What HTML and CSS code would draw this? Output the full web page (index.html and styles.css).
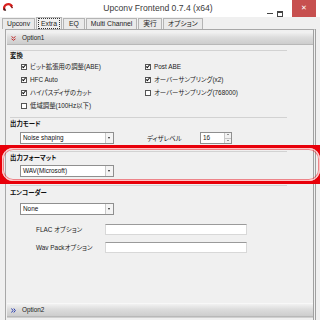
FILE: index.html
```html
<!DOCTYPE html>
<html lang="ja">
<head>
    <meta charset="UTF-8">
    <title>Upconv Frontend</title>
    <link rel="stylesheet" href="styles.css">
</head>
<body>
    <div class="window">
        <div class="titlebar">
            <svg class="appicon" width="10" height="9" viewBox="0 0 10 9">
                <path d="M1.5 8 A4 4 0 0 1 9 4.5" fill="none" stroke="#d8201e" stroke-width="2.4"/>
                <path d="M1 6.5 L2.5 8.8" stroke="#402020" stroke-width="1.6"/>
                <path d="M8 4 L9.5 6" stroke="#901010" stroke-width="1.4"/>
            </svg>
            <div class="title">Upconv Frontend 0.7.4 (x64)</div>
            <div class="winbtns">
                <span class="btn min"><i></i></span>
                <span class="btn max"><i></i></span>
                <span class="btn close">&#x2715;</span>
            </div>
        </div>

        <div class="tabs">
            <div class="tab">Upconv</div>
            <div class="tab active"><span>Extra</span></div>
            <div class="tab eq">EQ</div>
            <div class="tab">Multi Channel</div>
            <div class="tab">実行</div>
            <div class="tab">オプション</div>
        </div>

        <div class="page">
            <div class="bar">
                <svg class="chev" width="5" height="5" viewBox="0 0 5 5">
                    <path d="M0.5 0.5 L2.5 2 L4.5 0.5 M0.5 2.8 L2.5 4.3 L4.5 2.8" fill="none" stroke="#c0282a" stroke-width="1"/>
                </svg>
                Option1
            </div>

            <div class="content">
                <div class="group conv">
                    <div class="label">変換</div>
                    <div class="checks">
                        <label class="check"><span class="cb on"></span>ビット拡張用の調整(ABE)</label>
                        <label class="check"><span class="cb on"></span>Post ABE</label>
                        <label class="check"><span class="cb on"></span>HFC Auto</label>
                        <label class="check"><span class="cb on"></span>オーバーサンプリング(x2)</label>
                        <label class="check"><span class="cb on"></span>ハイパスディザのカット</label>
                        <label class="check"><span class="cb"></span>オーバーサンプリング(768000)</label>
                        <label class="check"><span class="cb"></span>低域調整(100Hz以下)</label>
                    </div>
                </div>

                <div class="group mode">
                    <div class="label">出力モード</div>
                    <div class="row">
                        <div class="select">Noise shaping<span class="drop"></span></div>
                        <div class="spinlabel">ディザレベル</div>
                        <div class="spin">16<span class="arrows"><span class="up"></span><span class="down"></span></span></div>
                    </div>
                </div>

                <div class="group format">
                    <div class="label">出力フォーマット</div>
                    <div class="select">WAV(Microsoft)<span class="drop"></span></div>
                </div>

                <div class="group encoder">
                    <div class="label">エンコーダー</div>
                    <div class="select">None<span class="drop"></span></div>
                    <div class="field flac">
                        <span class="fieldlabel">FLAC オプション</span>
                        <span class="textbox"></span>
                    </div>
                    <div class="field wavpack">
                        <span class="fieldlabel">Wav Packオプション</span>
                        <span class="textbox"></span>
                    </div>
                </div>
            </div>

            <div class="bar second">
                <svg class="chev" width="5" height="5" viewBox="0 0 5 5">
                    <path d="M0.5 0.5 L2 2.5 L0.5 4.5 M2.8 0.5 L4.3 2.5 L2.8 4.5" fill="none" stroke="#2a3cb0" stroke-width="1"/>
                </svg>
                Option2
            </div>
            <div class="bottom"></div>
        </div>

        <!-- red marker drawn over the output format group -->
        <div class="highlight"></div>
    </div>
</body>
</html>
```

FILE: styles.css
```css
body {
    margin: 0;
    padding: 0;
    background-color: #f0f0f0;
    font-family: "Liberation Sans", "Noto Sans CJK JP", sans-serif;
    font-size: 6.4px;
    color: #1a1a1a;
    font-feature-settings: "palt";
}
.window {
    position: relative;
    width: 320px;
    height: 320px;
    overflow: hidden;
    display: flex;
    flex-direction: column;
}
.titlebar {
    height: 17px;
    background-color: #fff;
    display: flex;
    align-items: flex-start;
    flex-shrink: 0;
}
.appicon {
    margin: 2px 0 0 3px;
}
.title {
    flex: 1;
    text-align: center;
    font-size: 8.6px;
    line-height: 16px;
    color: #3a3a3a;
    padding-left: 40px;
}
.winbtns {
    display: flex;
    align-items: flex-start;
}
.btn {
    display: block;
    height: 17px;
}
.min {
    width: 13px;
}
.min i {
    display: block;
    width: 6px;
    height: 1px;
    background: #444;
    margin: 13px 0 0 4px;
}
.max {
    width: 12px;
}
.max i {
    display: block;
    width: 4px;
    height: 3px;
    border: 1px solid #444;
    border-top-width: 2px;
    margin: 11px 0 0 1px;
}
.close {
    width: 24px;
    margin: 0 4px 0 4px;
    background-color: #c7504f;
    color: #fff;
    font-size: 7px;
    line-height: 16px;
    text-align: center;
}
.tabs {
    height: 12px;
    display: flex;
    align-items: flex-end;
    padding-left: 2px;
    flex-shrink: 0;
}
.tab {
    height: 10px;
    line-height: 10px;
    padding: 0 4px;
    border: 1px solid #b4b4b4;
    border-bottom: none;
    margin-right: 1px;
    background-color: #eaeaea;
    color: #222;
    font-size: 6.8px;
}
.tab.eq {
    padding: 0 5px;
}
.tab.active {
    height: 11px;
    background-color: #f0f0f0;
    padding: 0 1px;
}
.tab.active span {
    display: block;
    line-height: 9px;
    padding: 0 2px;
    border: 1px dotted #333;
}
.page {
    flex: 1;
    margin-left: 5px;
    margin-right: 4px;
    border-top: 1px solid #a8a8a8;
    border-left: 1px solid #a8a8a8;
    border-right: 3px double #a0a0a0;
    padding-top: 2px;
    display: flex;
    flex-direction: column;
    min-height: 0;
}
.bar {
    height: 12px;
    margin-left: 1px;
    line-height: 12px;
    background: linear-gradient(#f2f2f2, #dcdcdc 45%, #cdcdcd);
    border-bottom: 1px solid #b8b8b8;
    display: flex;
    align-items: center;
    color: #222;
    flex-shrink: 0;
}
.chev {
    margin: 0 6px 0 4px;
}
.content {
    flex: 1;
    padding: 5px 0 0 4px;
}
.group {
    width: 277px;
    border-top: 1px solid #d2d2d2;
}
.label {
    font-weight: bold;
    height: 11px;
    line-height: 11px;
    color: #111;
}
.conv .label {
    height: 9px;
    line-height: 10px;
}
.checks {
    display: grid;
    grid-template-columns: 124px 1fr;
    grid-auto-rows: 13px;
    padding: 0 0 5px 11px;
}
.check {
    display: flex;
    align-items: center;
    gap: 3px;
}
.cb {
    width: 4px;
    height: 4px;
    border: 1px solid #555;
    background: #fff;
    position: relative;
}
.cb.on::after {
    content: "";
    position: absolute;
    left: 1px;
    top: -1px;
    width: 1px;
    height: 3px;
    border-right: 1.3px solid #111;
    border-bottom: 1.3px solid #111;
    transform: rotate(40deg);
}
.row {
    display: flex;
    align-items: center;
    margin-top: 3px;
}
.select {
    position: relative;
    width: 90px;
    height: 10px;
    line-height: 10px;
    margin-left: 10px;
    padding-left: 2px;
    border: 1px solid #8f8f8f;
    background-color: #fff;
    color: #111;
}
.drop {
    position: absolute;
    right: 0;
    top: 0;
    width: 7px;
    height: 10px;
    border-left: 1px solid #c8c8c8;
    background: #f4f4f4;
}
.drop::after {
    content: "";
    position: absolute;
    left: 2px;
    top: 4px;
    border-left: 1.5px solid transparent;
    border-right: 1.5px solid transparent;
    border-top: 2px solid #222;
}
.mode {
    padding-bottom: 7px;
}
.spinlabel {
    margin-left: 33px;
    width: 53px;
}
.spin {
    position: relative;
    width: 28px;
    height: 10px;
    line-height: 10px;
    padding-left: 2px;
    border: 1px solid #8f8f8f;
    background-color: #fff;
}
.arrows {
    position: absolute;
    right: 0;
    top: 0;
    width: 6px;
    height: 10px;
    display: flex;
    flex-direction: column;
    border-left: 1px solid #c8c8c8;
}
.arrows span {
    flex: 1;
    background: #f2f2f2;
    position: relative;
}
.arrows .up {
    border-bottom: 1px solid #c8c8c8;
}
.up::after, .down::after {
    content: "";
    position: absolute;
    left: 2px;
    top: 1px;
    border-left: 1px solid transparent;
    border-right: 1px solid transparent;
}
.up::after {
    border-bottom: 1.5px solid #333;
}
.down::after {
    border-top: 1.5px solid #333;
}
.format {
    padding-bottom: 8px;
}
.format .select {
    margin-top: 2px;
}
.encoder .label {
    margin-top: 1px;
}
.encoder .select {
    margin-top: 5px;
}
.field {
    display: flex;
    align-items: center;
    padding-left: 26px;
}
.flac {
    margin-top: 9px;
}
.wavpack {
    margin-top: 7px;
}
.fieldlabel {
    width: 69px;
    color: #222;
}
.textbox {
    display: block;
    width: 140px;
    height: 9px;
    border: 1px solid #d8d8d8;
    border-top: 1px solid #9a9a9a;
    background-color: #fff;
}
.bar.second {
    border-top: 1px solid #f8f8f8;
}
.bottom {
    height: 2px;
    margin-left: 1px;
    border-top: 1px solid #cfcfcf;
    flex-shrink: 0;
}
.highlight {
    position: absolute;
    left: -1px;
    top: 145px;
    width: 318px;
    height: 33px;
    border: 3px solid #e8000a;
    overflow: hidden;
}
.highlight::before {
    content: "";
    position: absolute;
    inset: 0;
    border: 1px solid #ffc4c4;
    border-radius: 11px;
    box-shadow: 0 0 0 14px #e8000a, inset 0 0 0 1px rgba(232, 0, 10, 0.45);
}
```
